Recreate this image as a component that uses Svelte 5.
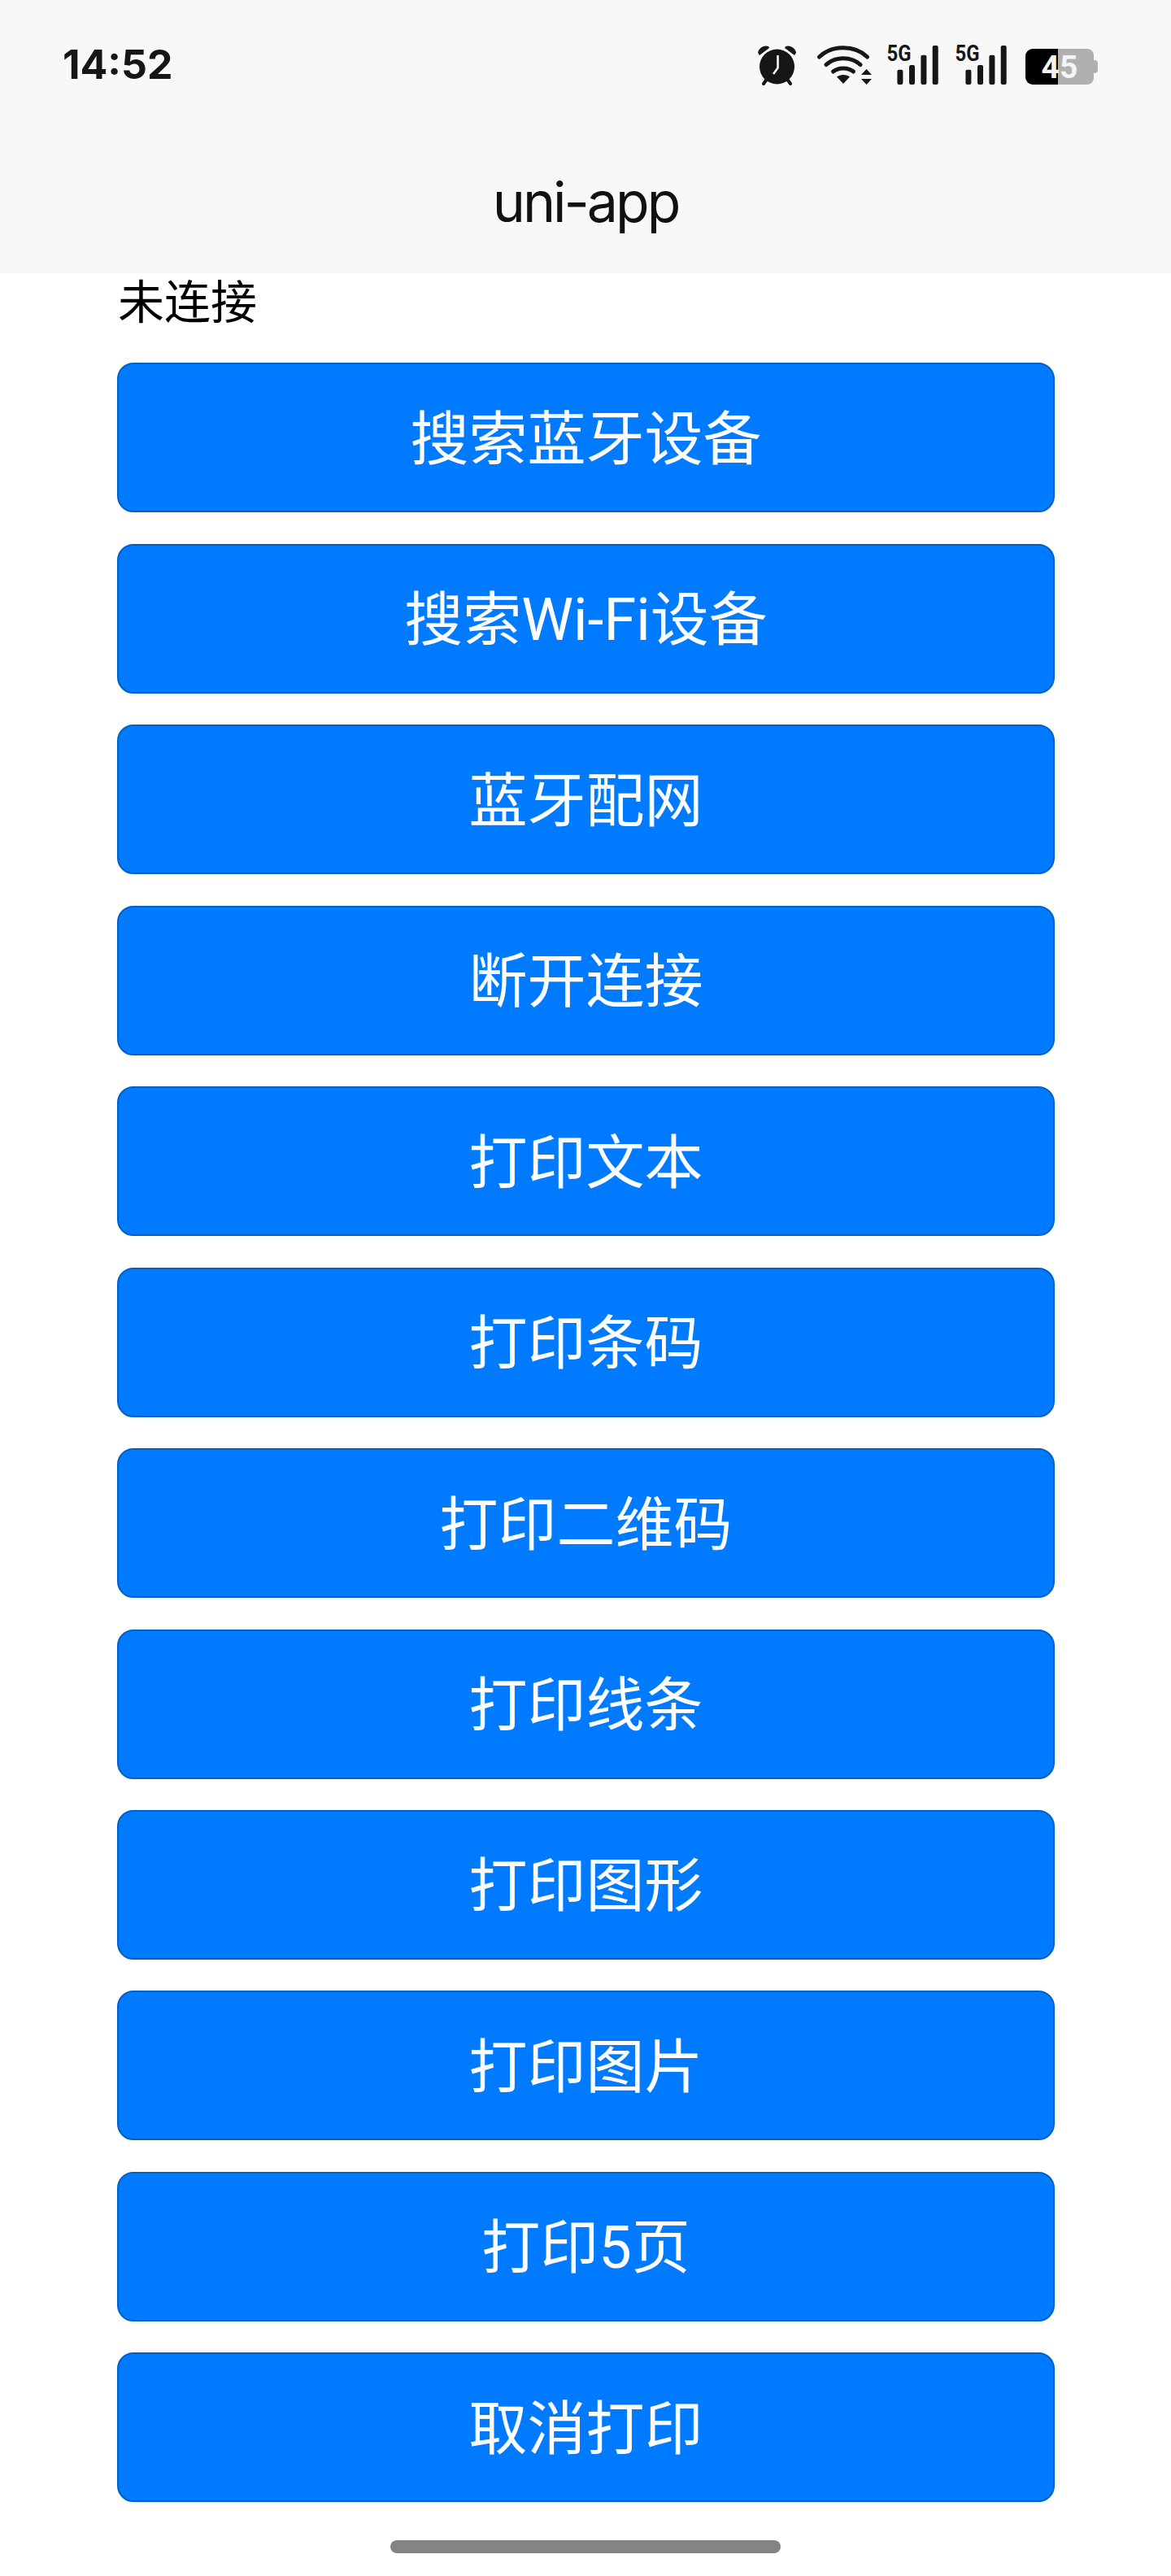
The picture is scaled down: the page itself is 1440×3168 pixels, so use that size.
<script lang="ts">
  const ACTIONS = [
    '搜索蓝牙设备',
    '搜索Wi-Fi设备',
    '蓝牙配网',
    '断开连接',
    '打印文本',
    '打印条码',
    '打印二维码',
    '打印线条',
    '打印图形',
    '打印图片',
    '打印5页',
    '取消打印',
  ];
  // signal bar rects for the two 5G icons: [x, top]
  const BARS = [
    [13.4, 30.7],
    [28, 25],
    [42.4, 12.7],
    [56.7, 1],
  ];
</script>

{#snippet signal()}
  <svg class="signal" width="64" height="50" viewBox="0 0 64 50" aria-hidden="true">
    <text x="0.5" y="20" class="fiveg" textLength="30" lengthAdjust="spacingAndGlyphs">5G</text>
    {#each BARS as [x, top]}
      <rect {x} y={top} width="7" height={49 - top} rx="2" fill="#161616" />
    {/each}
  </svg>
{/snippet}

<div class="page">
  <header class="nav">
    <div class="statusbar">
      <span class="time">14:52</span>
      <div class="icons">
        <!-- alarm -->
        <svg class="alarm" width="50" height="50" viewBox="0 0 50 50" aria-hidden="true">
          <path d="M1 10 C2 4 8 0 14 2 L15 4 L3 13 Z" fill="#161616" />
          <path d="M48 10 C47 4 41 0 35 2 L34 4 L46 13 Z" fill="#161616" />
          <circle cx="24.5" cy="27" r="21.5" fill="#161616" />
          <path d="M13 41 L8 48 M36 41 L41 48" stroke="#161616" stroke-width="4" stroke-linecap="round" />
          <path d="M25.5 13 V28.5 L20 36" fill="none" stroke="#f8f8f8" stroke-width="2.6" stroke-linejoin="round" />
        </svg>
        <!-- wifi -->
        <svg class="wifi" width="69" height="50" viewBox="0 0 69 50" aria-hidden="true">
          <g fill="none" stroke="#161616" stroke-width="5" stroke-linecap="round">
            <path d="M3.5 15 C19 0 47 0 62.5 15" />
            <path d="M12 24.5 C23 14 43 14 54 24.5" />
            <path d="M20.5 33 C27 27.5 39 27.5 45.5 33" />
          </g>
          <path d="M25 39.5 C29 36 37 36 41 39.5 L33 48 Z" fill="#161616" />
          <path d="M61.5 30 L68 37 H55 Z M55 42 H68 L61.5 49 Z" fill="#161616" />
        </svg>
        {@render signal()}
        {@render signal()}
        <!-- battery -->
        <svg class="battery" width="89" height="46" viewBox="0 0 89 46" aria-hidden="true">
          <path d="M40 1 H76 a8 8 0 0 1 8 8 V37 a8 8 0 0 1 -8 8 H40 Z" fill="#b0b0b0" />
          <path d="M84 15 h1 a4 4 0 0 1 4 4 v8 a4 4 0 0 1 -4 4 h-1 Z" fill="#b0b0b0" />
          <path d="M40 1 H9 a9 9 0 0 0 -9 9 V36 a9 9 0 0 0 9 9 H40 Z" fill="#000" />
          <text x="42" y="37" class="level" text-anchor="middle">45</text>
        </svg>
      </div>
    </div>
    <div class="title">uni-app</div>
  </header>

  <main class="content">
    <div class="state">未连接</div>
    {#each ACTIONS as label}
      <button type="button" class="btn">{label}</button>
    {/each}
  </main>

  <div class="homebar"><span class="homebar__pill"></span></div>
</div>

<style>
  :global(body) {
    margin: 0;
    background: #fff;
  }

  .page {
    width: 1440px;
    height: 3168px;
    display: flex;
    flex-direction: column;
    font-family: Inter, "Noto Sans CJK SC", sans-serif;
    color: #000;
    overflow: hidden;
  }

  .nav {
    height: 336px;
    flex: none;
    background: #f8f8f8;
    display: flex;
    flex-direction: column;
  }

  .statusbar {
    height: 160px;
    padding: 51px 90px 0 77px;
    box-sizing: border-box;
    display: flex;
    justify-content: space-between;
    align-items: flex-start;
  }

  .time {
    font-size: 50px;
    line-height: 56px;
    font-weight: 700;
    color: #161616;
  }

  .icons {
    display: flex;
    align-items: flex-start;
    margin-top: 4px;
  }

  .wifi {
    margin-left: 23px;
  }

  .signal {
    margin-left: 17px;
    overflow: visible;
  }

  .signal + .signal {
    margin-left: 20px;
  }

  .battery {
    margin-left: 23px;
    margin-top: 4px;
  }

  .fiveg {
    font-family: Roboto, sans-serif;
    font-weight: 700;
    font-size: 28px;
    fill: #161616;
  }

  .level {
    font-family: Roboto, sans-serif;
    font-weight: 700;
    font-size: 39px;
    fill: #f4f4f4;
  }

  .title {
    text-align: center;
    font-size: 68px;
    letter-spacing: -3px;
    line-height: 176px;
    height: 176px;
    color: #111;
  }

  .content {
    padding: 0 143px 0 144px;
    display: flex;
    flex-direction: column;
    gap: 38.45px;
  }

  .state {
    height: 72px;
    font-size: 57px;
    line-height: 72px;
    padding-left: 1px;
  }

  .btn {
    appearance: none;
    height: 184px;
    width: 100%;
    padding: 0 0 10px;
    box-sizing: border-box;
    border: 2px solid #0060c8;
    border-radius: 20px;
    background: #007aff;
    color: #fff;
    font-family: Roboto, "Noto Sans CJK SC", sans-serif;
    font-size: 72px;
    font-weight: 400;
    text-align: center;
  }

  .homebar {
    position: absolute;
    top: 3124px;
    left: 0;
    width: 1440px;
    display: flex;
    justify-content: center;
  }

  .homebar__pill {
    width: 480px;
    height: 16px;
    border-radius: 8px;
    background: #848484;
  }
</style>
